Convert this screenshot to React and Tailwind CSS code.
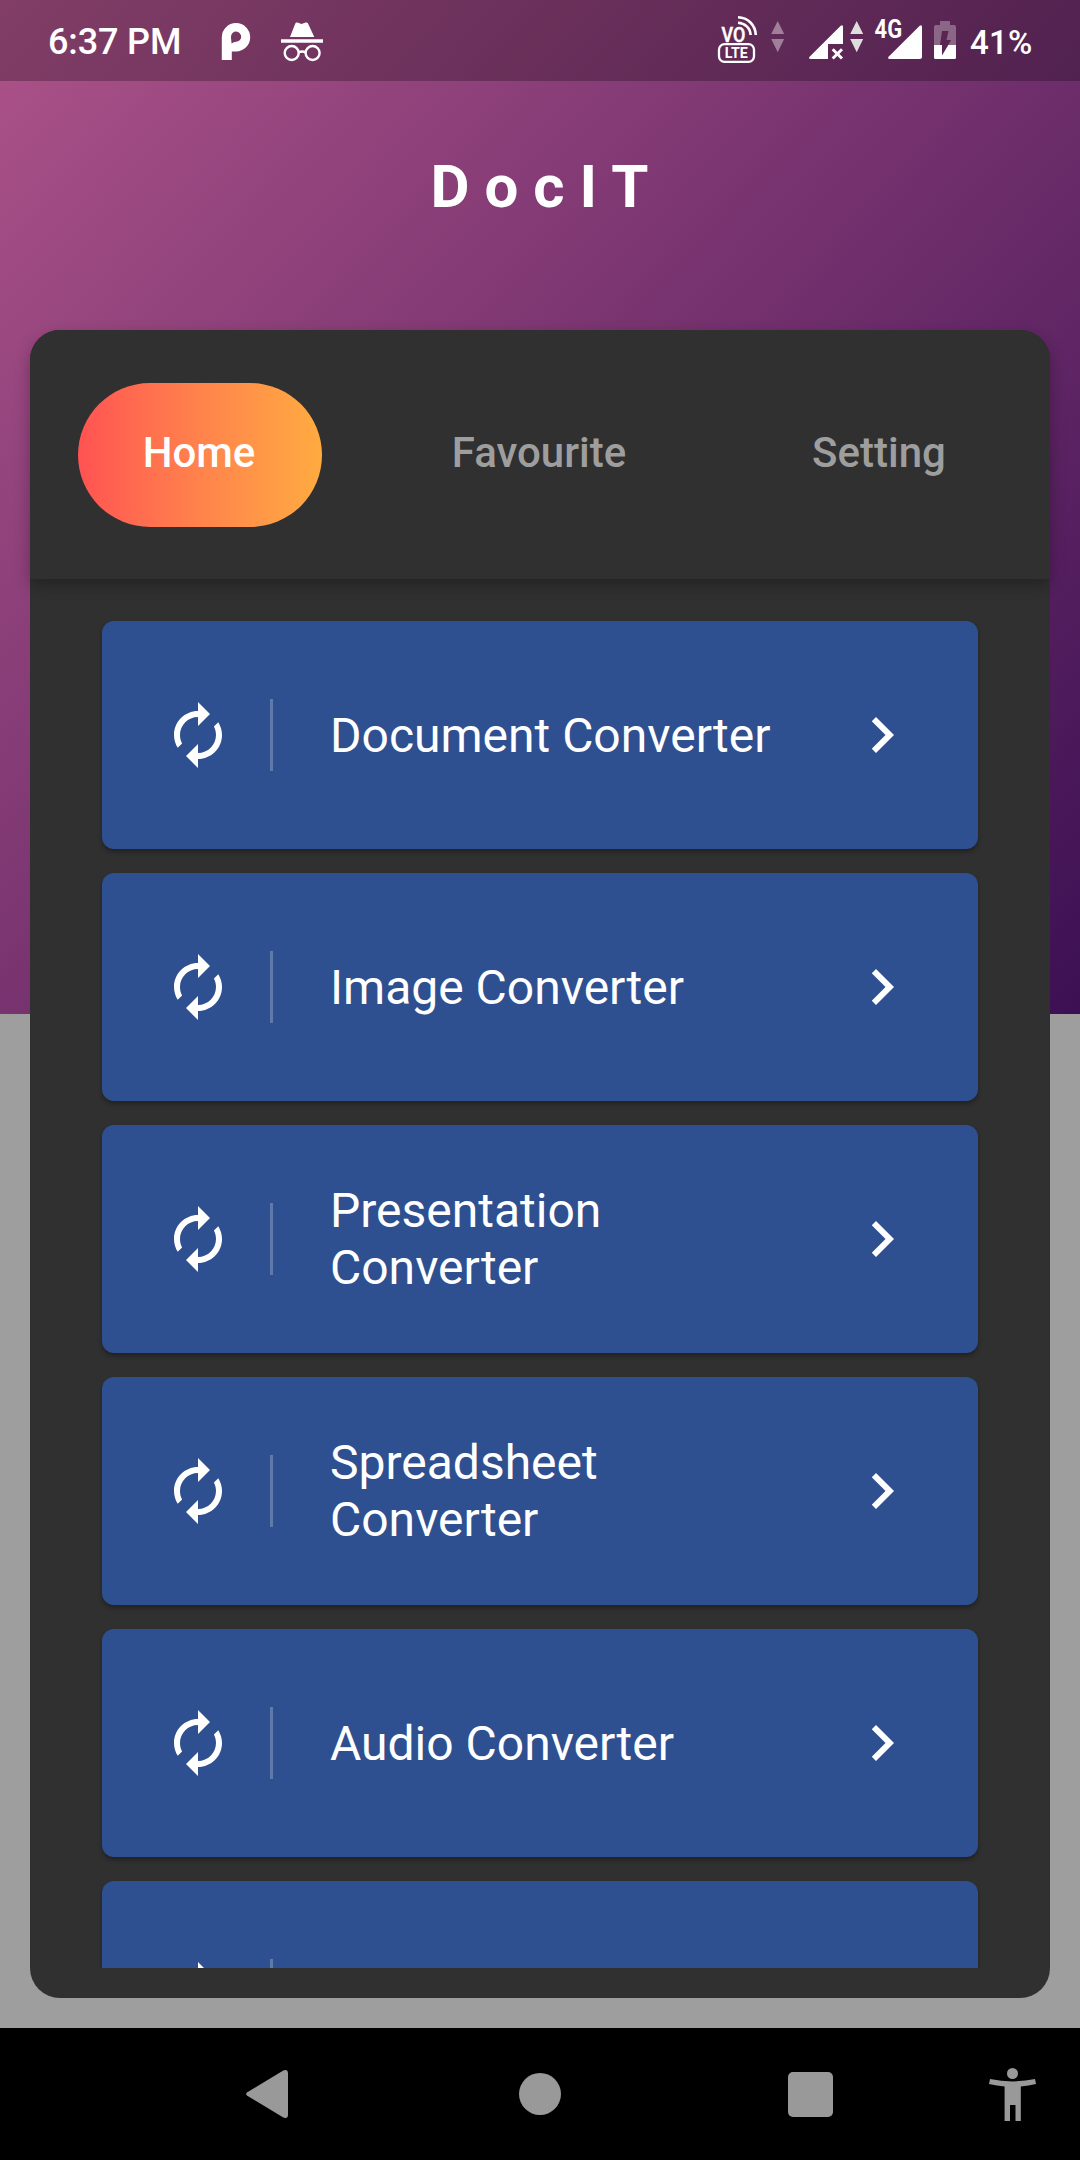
import React from "react";

const ITEMS = [
  "Document Converter",
  "Image Converter",
  "Presentation Converter",
  "Spreadsheet Converter",
  "Audio Converter",
  "",
];

function DataArrows({ className }) {
  return (
    <svg className={className} width="14" height="81" viewBox="0 0 14 81" fill="currentColor">
      <path d="M6.7 21L13.2 34H.2z" />
      <path d="M6.7 52.3L13.2 39H.2z" />
    </svg>
  );
}

function StatusBar() {
  return (
    <div className="flex h-[81px] w-full items-center bg-black/25 pl-12 pr-[46px] text-white">
      <span className="w-[173px] whitespace-nowrap pt-[3px] text-[36px] font-medium leading-[81px] tracking-[-0.15px]">6:37 PM</span>

      <svg className="shrink-0" width="30" height="81" viewBox="221 0 30 81" fill="#fff">
        <path
          fillRule="evenodd"
          d="M221.8 60V37.300a14.200 14.200 0 1 1 14.200 14.200h-4.200V60zM231.600 43.400q2.200-1.600 4.400-1.600a5.100 5.100 0 1 0-5-5.100q0 1.400.2 3z"
        />
      </svg>

      <svg className="ml-[29px] shrink-0" width="44" height="81" viewBox="280 0 44 81" fill="#fff">
        <path d="M290 37l5.300-13.400q.6-1.500 2.200-1l4 1.500 4.200-1.500q1.700-.5 2.300 1L314.300 37z" />
        <path d="M281 39.200h42v3.500h-42z" />
        <g fill="none" stroke="#fff" strokeWidth="2.400">
          <circle cx="291.700" cy="53" r="7" />
          <circle cx="312.600" cy="53" r="7" />
          <path d="M298.500 52.300q3.700-1.500 7.200 0" />
        </g>
      </svg>

      <svg className="ml-auto shrink-0" width="42" height="81" viewBox="716 0 42 81" fill="#fff">
        <text x="721.500" y="41.500" fontSize="19.500" fontWeight="500" stroke="#fff" strokeWidth=".5" textLength="23.800" lengthAdjust="spacingAndGlyphs">VO</text>
        <g fill="none" stroke="#fff" strokeWidth="2.600">
          <path d="M738 17.200C748 17.500 755.300 25 755.800 35" />
          <path d="M738 22.700C745 23 750.300 28 750.600 35" />
          <rect x="719" y="44.200" width="35" height="17.600" rx="5.500" strokeWidth="2.300" />
        </g>
        <text x="724.800" y="58.400" fontSize="14.800" fontWeight="700" textLength="23" lengthAdjust="spacingAndGlyphs">LTE</text>
      </svg>

      <DataArrows className="ml-[13px] shrink-0 text-white/40" />

      <svg className="ml-[23px] shrink-0" width="36" height="81" viewBox="808 0 36 81" fill="#fff">
        <path d="M843 44V27q0-3-2.300-1.200L809.600 56.800Q808 59 811 59H828V44z" />
        <path d="M832.700 49.200l9.300 9.300M842 49.200l-9.300 9.300" stroke="#fff" strokeWidth="2.900" />
      </svg>

      <DataArrows className="ml-[6px] shrink-0 text-[#dedede]" />

      <svg className="ml-[10px] shrink-0" width="50" height="81" viewBox="874 0 50 81" fill="#fff">
        <text x="874.600" y="37.600" fontSize="26" fontWeight="700" textLength="27.500" lengthAdjust="spacingAndGlyphs">4G</text>
        <path d="M922 57V27q0-3-2.300-1.200L888.600 56.800Q887 59 890 59h30q2 0 2-2z" />
      </svg>

      <svg className="ml-[10px] shrink-0" width="22" height="81" viewBox="934 0 22 81" fill="#fff">
        <path
          fillOpacity=".3"
          fillRule="evenodd"
          d="M934 45V27q0-2 2-2h4v-4h10v4h4q2 0 2 2v18h-7.700l2.700-5h-4.500l2-9h-6.500l-2 14z"
        />
        <path d="M934 45h7.500l.5 0v10.500L948.300 45h7.700v12.500q0 1.500-1.500 1.500h-19q-1.500 0-1.500-1.500z" />
      </svg>

      <span className="ml-[14px] w-[64px] whitespace-nowrap pt-[3px] text-[33px] font-medium leading-[81px] tracking-[0.3px]">41%</span>
    </div>
  );
}

function Tabs() {
  return (
    <div className="relative z-10 grid h-[249px] w-full shrink-0 grid-cols-3 items-center rounded-t-[30px] bg-[#303030] text-center text-[42px] font-medium leading-[49px] text-[#9e9e9e] shadow-[0_6px_15px_rgba(0,0,0,0.28)]">
      <div className="mx-12 flex h-[144px] items-center justify-center rounded-[72px] bg-linear-to-r from-[#ff5252] to-[#ffab40] text-white">
        <span className="-mt-1 pr-[2px]">Home</span>
      </div>
      <span className="-mt-1 pr-[2px]">Favourite</span>
      <span className="-mt-1 pr-[2px]">Setting</span>
    </div>
  );
}

function ConverterCard({ label }) {
  return (
    <div className="flex h-[228px] shrink-0 items-center rounded-[12px] bg-[#2e5090] px-[60px] text-white shadow-[0_3px_4px_rgba(0,0,0,0.3)]">
      <svg className="shrink-0" width="72" height="72" viewBox="0 0 24 24" fill="currentColor">
        <path d="M12 6v3l4-4-4-4v3c-4.420 0-8 3.580-8 8 0 1.570.46 3.030 1.240 4.260L6.700 14.800c-.45-.83-.7-1.790-.7-2.800 0-3.310 2.690-6 6-6zm6.760 1.740L17.300 9.200c.44.840.7 1.790.7 2.800 0 3.310-2.690 6-6 6v-3l-4 4 4 4v-3c4.420 0 8-3.580 8-8 0-1.570-.46-3.030-1.240-4.260z" />
      </svg>
      <div className="ml-9 h-[72px] w-[3px] shrink-0 bg-white/24" />
      <span className="ml-[57px] w-[468px] text-[48px] leading-[57px]">{label}</span>
      <svg className="ml-12 shrink-0" width="72" height="72" viewBox="0 0 24 24" fill="currentColor">
        <path d="M8.590 16.590L13.170 12 8.590 7.410 10 6l6 6-6 6z" />
      </svg>
    </div>
  );
}

function NavBar() {
  return (
    <div className="flex h-[132px] w-full shrink-0 items-center bg-black pl-[246px] text-[#999]">
      <svg width="42" height="48" viewBox="0 0 42 48" fill="currentColor">
        <path d="M1.300 22.200L37.300.5Q42-1.300 42 3V45q0 4.300-4.700 2.500L1.300 25.800Q-1 24 1.300 22.200z" />
      </svg>
      <div className="ml-[231px] size-[42px] rounded-full bg-[#999]" />
      <div className="ml-[226.5px] size-[45px] rounded-[5px] bg-[#999]" />
      <svg className="ml-[155.500px]" width="49" height="54" viewBox="988 2067 49 54" fill="currentColor">
        <circle cx="1012.500" cy="2073.500" r="5.500" />
        <path d="M990 2079q22.500 4.800 45 0l1 5q-7.500 1.700-15.200 2.600V2121h-5.300v-16h-5.500v16h-5.400v-34.400q-7.600-.9-15.600-2.600z" />
      </svg>
    </div>
  );
}

export default function App() {
  return (
    <div className="flex h-[2160px] w-[1080px] flex-col overflow-hidden bg-[#9e9e9e] font-[Roboto,sans-serif]">
      <div className="h-[1014px] shrink-0 bg-[linear-gradient(133.2deg,#ad5389,#3c1053)]">
        <StatusBar />
        <h1 className="h-[249px] pl-[14px] pt-[71px] text-center text-[60px] font-bold leading-[70px] tracking-[15px] text-white">
          DocIT
        </h1>
      </div>
      <main className="relative z-10 mx-[30px] -mt-[684px] mb-[30px] flex h-[1668px] shrink-0 flex-col rounded-[30px] bg-[#303030]">
        <Tabs />
        <div className="mb-[30px] flex min-h-0 flex-1 flex-col gap-6 overflow-hidden px-[72px] pt-[42px]">
          {ITEMS.map((label, index) => (
            <ConverterCard key={index} label={label} />
          ))}
        </div>
      </main>
      <NavBar />
    </div>
  );
}
